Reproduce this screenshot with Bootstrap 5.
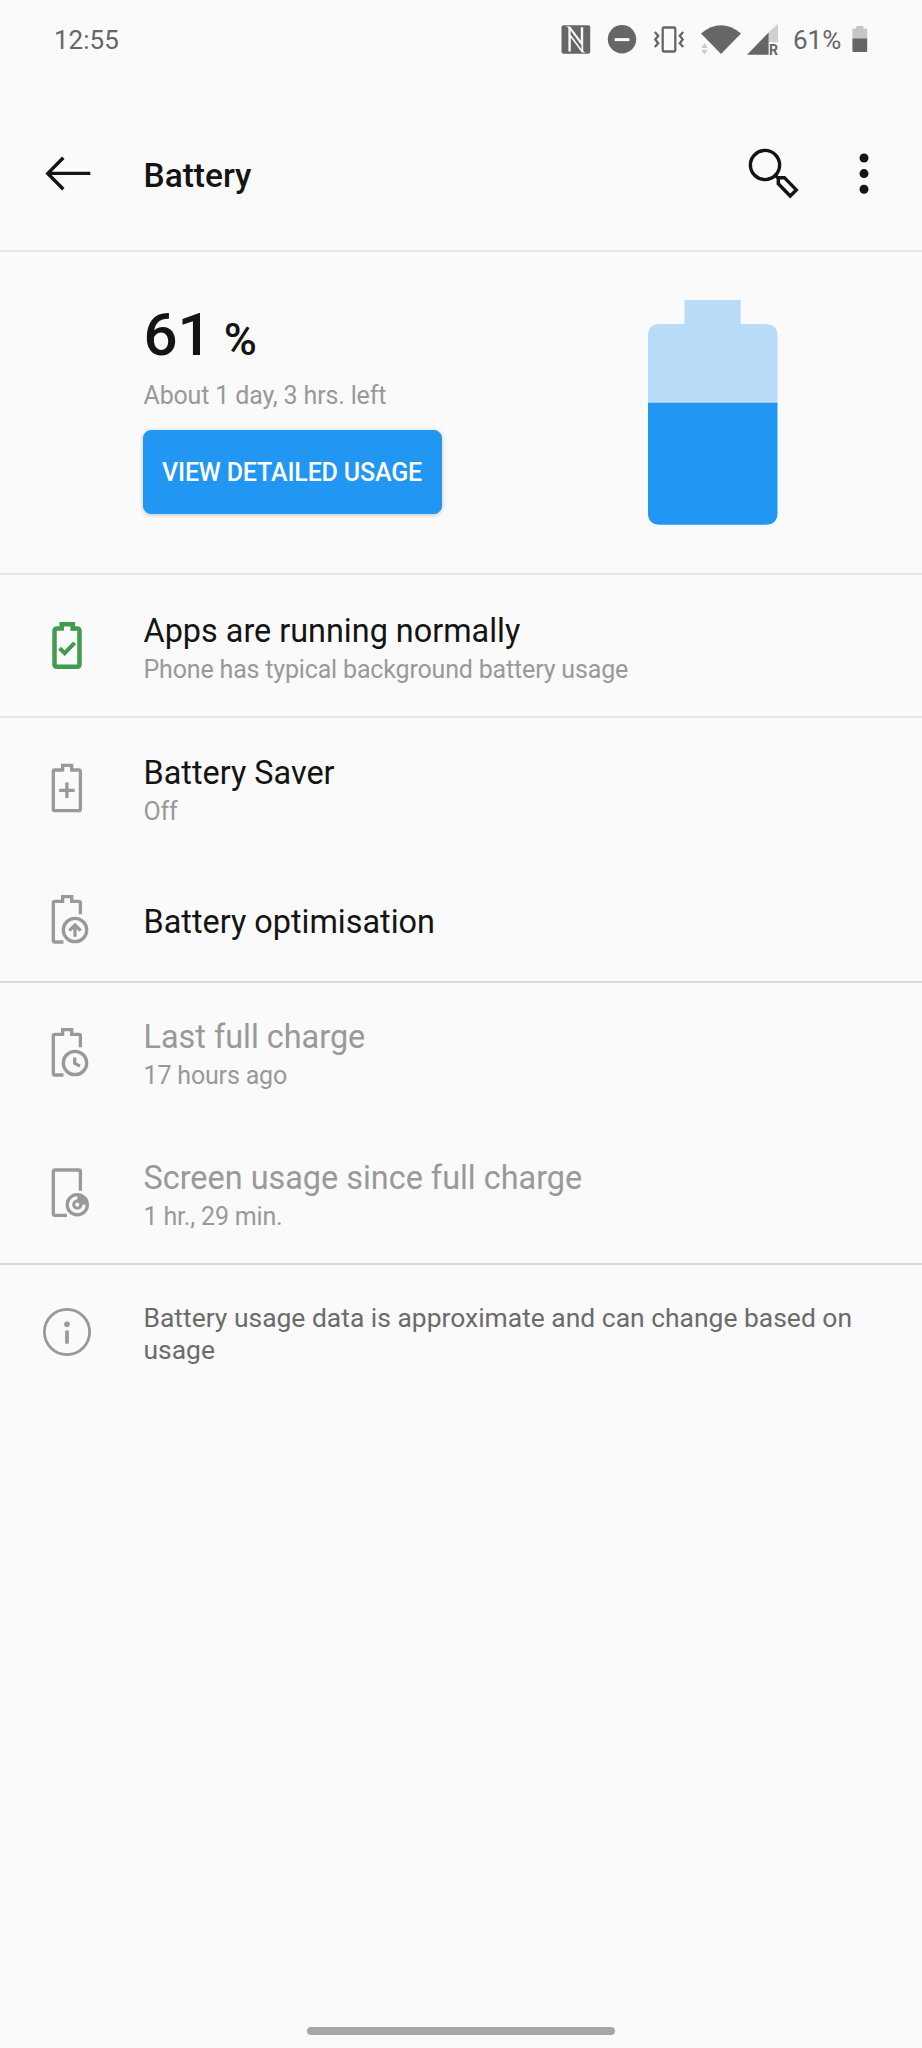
<!DOCTYPE html>
<html lang="en">
<head>
<meta charset="utf-8">
<meta name="viewport" content="width=device-width, initial-scale=1">
<title>Battery</title>
<link href="https://cdn.jsdelivr.net/npm/bootstrap@5.3.0/dist/css/bootstrap.min.css" rel="stylesheet">
<style>
  body { background: #fafafa; color: #141414; font-family: Roboto, "Liberation Sans", sans-serif; }
  svg { display: block; flex: none; }
  .screen { width: 922px; height: 2048px; overflow: hidden; }
  .status { height: 80px; padding: 22px 54.5px 0 54px; color: #666; font-size: 26px; line-height: 36px; }
  .status .dnd { margin-left: 14px; }
  .status .signal { margin-left: 3px; }
  .status .pct { width: 58.5px; margin-left: 13px; white-space: nowrap; }
  .appbar { height: 172px; padding: 65px 46px 0 42px; }
  .appbar h1 { font-size: 33.5px; font-weight: 500; line-height: 62px; margin: 0 0 0 47.5px; }
  .appbar .dots { margin-left: 51px; }
  .rule { border-bottom: 2px solid #e5e5e5; }
  .rule-strong { border-bottom: 2px solid #dadada; }
  .hero { height: 323px; padding: 48px 144.5px 0 142.5px; }
  .level { font-size: 60px; font-weight: 500; line-height: 70px; padding-left: 1px; }
  .level span { font-size: 45px; margin-left: -3px; }
  .remaining { color: #999; font-size: 25px; letter-spacing: -.16px; line-height: 36px; margin-top: 3px; padding-left: 1px; }
  .btn-usage { --bs-btn-bg: #2196f3; --bs-btn-color: #fff; --bs-btn-border-color: #2196f3; width: 299px; height: 84px; margin-top: 16px; padding: 1px 0 0; font-size: 25px; letter-spacing: -.17px; font-weight: 500; border-radius: 8px; box-shadow: 0 1px 4px rgba(0,0,0,.22); white-space: nowrap; }
  .item { padding-left: 40px; }
  .item-icon { color: #999; margin-right: 49.5px; }
  .item-title { font-size: 32.4px; line-height: 40px; }
  .item-sub { font-size: 25px; letter-spacing: -.17px; line-height: 38px; color: #999; }
  .item-title.dim { color: #999; }
  .note { font-size: 26.45px; line-height: 31.7px; color: #6b6b6b; width: 730px; }
  .homebar { width: 308px; height: 8px; background: #a6a6a6; margin-bottom: 13.5px; }
</style>
</head>
<body>
<svg width="0" height="0" class="position-absolute" aria-hidden="true">
  <defs>
    <g id="cut-battery" fill="none" stroke="currentColor" stroke-width="3.3">
      <path d="M23.5 50H14.8Q13.3 50 13.3 48.5V10.8Q13.3 9.3 14.8 9.3H22.6V4.6H31.7V9.3H38.9Q40.4 9.3 40.4 10.8V22.3"/>
      <circle cx="35" cy="38" r="11.7"/>
    </g>
  </defs>
</svg>
<div class="screen d-flex flex-column">
  <header class="status d-flex align-items-start">
    <div class="me-auto">12:55</div>
    <svg width="34" height="36" viewBox="559 22 34 36">
      <rect x="561.5" y="25.3" width="28.7" height="28.4" rx="2" fill="#666"/>
      <path d="M565.5 26.5H570.2L580.8 40.8V27.2H583.2V50.2Q583.2 52 586 52.5H581.8L570.8 37.6V51.5H568.4V28.5Q568.3 27 565.5 26.5Z" fill="#fafafa"/>
      <path d="M570.6 30.5L581.4 45.2V49.2L570.6 34.5Z" fill="#666"/>
    </svg>
    <svg class="dnd" width="30" height="36" viewBox="607 22 30 36">
      <circle cx="622" cy="39.3" r="14.2" fill="#666"/><path d="M614.6 39.6H629.4" stroke="#fafafa" stroke-width="3"/>
    </svg>
    <svg class="ms-3" width="32" height="36" viewBox="653 22 32 36" fill="none" stroke="#666" stroke-width="2.3">
      <rect x="662.7" y="27.5" width="12.6" height="24" rx="1.2"/>
      <path d="M654.8 32L658.2 35.7L655.3 39.5L658.2 43.2L654.8 47M683.2 32L679.8 35.7L682.7 39.5L679.8 43.2L683.2 47"/>
    </svg>
    <svg class="ms-3" width="42" height="36" viewBox="701 22 42 36">
      <path d="M701 33.5Q721 17.2 741 33.5L721 54Z" fill="#666"/>
      <path d="M701.3 48L704.5 43L707.7 48ZM701.3 50L704.5 54.4L707.7 50Z" fill="#ccc"/>
    </svg>
    <svg class="signal" width="34" height="36" viewBox="746 22 34 36">
      <path d="M778 23.5V42.3H768.5V32.5Z" fill="#d0d0d0"/>
      <path d="M747 54.7L768.6 32.6V54.7Z" fill="#666"/>
      <text x="769" y="54.7" font-size="14" font-weight="700" fill="#666">R</text>
    </svg>
    <div class="pct">61%</div>
    <svg width="16" height="36" viewBox="851.5 22 16 36">
      <path d="M851.9 39V28.6H855.7V26H862.9V28.6H866.7V39Z" fill="#c6c6c6"/><path d="M851.9 38.6H866.7V50.8Q866.7 52 865.5 52H853.1Q851.9 52 851.9 50.8Z" fill="#666"/>
    </svg>
  </header>

  <nav class="appbar rule d-flex align-items-start">
    <svg width="54" height="56" viewBox="42 145 54 56" fill="none" stroke="#141414" stroke-width="3.4"><path d="M90.3 173.4H47.8M63.3 157.8L47.8 173.4L63.3 189.2"/></svg>
    <h1>Battery</h1>
    <svg class="ms-auto" width="56" height="56" viewBox="745 145 56 56" fill="none" stroke="#141414" stroke-width="3.4">
      <circle cx="765" cy="165" r="14.6"/><path d="M775.2 175.2L778 178M778.3 177.8L784.4 177.6L796.3 189.9L790.2 196L778.3 183.8Z"/>
    </svg>
    <svg class="dots" width="24" height="56" viewBox="852 145 24 56" fill="#141414"><circle cx="864" cy="158" r="4.5"/><circle cx="864" cy="173.6" r="4.5"/><circle cx="864" cy="189.3" r="4.5"/></svg>
  </nav>

  <section class="hero rule d-flex justify-content-between align-items-start">
    <div>
      <div class="level">61 <span>%</span></div>
      <div class="remaining">About 1 day, 3 hrs. left</div>
      <button type="button" class="btn btn-usage">VIEW DETAILED USAGE</button>
    </div>
    <svg width="130" height="225" viewBox="0 0 130 225">
      <path d="M0 103V36Q0 24 12 24H36.5V0H92.7V24H117.5Q129.5 24 129.5 36V103Z" fill="#b8dcf8"/>
      <path d="M0 102.7H129.5V212.7Q129.5 224.7 117.5 224.7H12Q0 224.7 0 212.7Z" fill="#2196f3"/>
    </svg>
  </section>

  <section class="rule item d-flex" style="height:143px;padding-top:36px">
    <svg class="item-icon mt-2" width="54" height="54" viewBox="0 0 54 54" fill="none" stroke="#439c4b" stroke-width="4.5">
      <path d="M21.7 9.5H17Q14.5 9.5 14.5 12V45.2Q14.5 47.7 17 47.7H37Q39.5 47.7 39.5 45.2V12Q39.5 9.5 37 9.5H32.8V5.2H21.7V11.7"/>
      <path d="M32.8 9V11.7"/><path d="M19.6 29.2L24.7 34.2L34.6 23.8" stroke-width="4"/>
    </svg>
    <div><div class="item-title">Apps are running normally</div><div class="item-sub">Phone has typical background battery usage</div></div>
  </section>

  <section class="rule-strong" style="height:265px">
    <div class="item d-flex" style="height:140px;padding-top:35px">
      <svg class="item-icon mt-2" width="54" height="54" viewBox="0 0 54 54" fill="none" stroke="currentColor" stroke-width="3.3">
        <path d="M22.6 9H14.8Q13.3 9 13.3 10.5V48.2Q13.3 49.7 14.8 49.7H38.9Q40.4 49.7 40.4 48.2V10.5Q40.4 9 38.9 9H31.7V4.3H22.6V10.6M31.7 8V10.6M26.9 21.5V37.1M19.1 29.3H34.7"/>
      </svg>
      <div><div class="item-title">Battery Saver</div><div class="item-sub">Off</div></div>
    </div>
    <div class="item d-flex" style="padding-top:34px">
      <svg class="item-icon" width="54" height="54" viewBox="0 0 54 54"><use href="#cut-battery"/><path d="M35 44.8V33M29.3 38.7L35 33L40.7 38.7" fill="none" stroke="currentColor" stroke-width="3.2"/></svg>
      <div class="item-title" style="margin-top:10px">Battery optimisation</div>
    </div>
  </section>

  <section class="rule-strong" style="height:282px">
    <div class="item d-flex" style="height:141px;padding-top:34px">
      <svg class="item-icon mt-2" width="54" height="54" viewBox="0 0 54 54"><use href="#cut-battery"/><path d="M34.7 32.5V38.4L40 41.2" fill="none" stroke="currentColor" stroke-width="3.2"/></svg>
      <div><div class="item-title dim">Last full charge</div><div class="item-sub">17 hours ago</div></div>
    </div>
    <div class="item d-flex" style="padding-top:34px">
      <svg class="item-icon mt-2" width="54" height="54" viewBox="0 0 54 54" fill="none" stroke="currentColor" stroke-width="3.3">
        <path d="M27 49.3H14.8Q13.3 49.3 13.3 47.8V5.5Q13.3 4 14.8 4H38.9Q40.4 4 40.4 5.5V24.7"/>
        <circle cx="37.3" cy="38.7" r="10.1"/><circle cx="37.3" cy="38.7" r="3.6" stroke-width="3"/>
        <path d="M37.3 28.5V35L40 38.7H48A10.5 10.5 0 0 0 37.3 28.5Z" fill="currentColor" stroke="none"/>
      </svg>
      <div><div class="item-title dim">Screen usage since full charge</div><div class="item-sub">1 hr., 29 min.</div></div>
    </div>
  </section>

  <section class="item d-flex" style="padding-top:37px">
    <svg class="item-icon" style="margin-top:3px" width="54" height="54" viewBox="0 0 54 54"><circle cx="27" cy="27" r="22.6" fill="none" stroke="currentColor" stroke-width="2.8"/><circle cx="27" cy="19.3" r="2.8" fill="currentColor"/><path d="M27 25.5V38.7" stroke="currentColor" stroke-width="3.7"/></svg>
    <div class="note">Battery usage data is approximate and can change based on usage</div>
  </section>

  <div class="homebar rounded-pill mt-auto mx-auto"></div>
</div>
<script src="https://cdn.jsdelivr.net/npm/bootstrap@5.3.0/dist/js/bootstrap.bundle.min.js"></script>
</body>
</html>
